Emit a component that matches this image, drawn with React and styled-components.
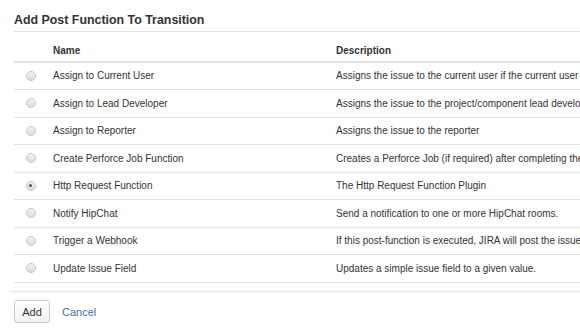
import styled, { createGlobalStyle } from "styled-components";

const GlobalStyle = createGlobalStyle`
  html, body {
    margin: 0;
    padding: 0;
    background: #fff;
    overflow: hidden;
  }
  body {
    font-family: "Liberation Sans", Arial, sans-serif;
    color: #333;
  }
`;

const Dialog = styled.div`
  width: 580px;
  height: 330px;
  overflow: hidden;
`;

const Header = styled.div`
  margin: 12.5px 0 0 14px;
  padding-bottom: 3px;
  border-bottom: 1px solid #e2e2e2;
`;

const Title = styled.h2`
  margin: 0;
  font-size: 12.4px;
  line-height: 15px;
  font-weight: bold;
  color: #333;
`;

const Body = styled.div`
  padding-left: 14px;
`;

const Table = styled.table`
  width: 720px;
  border-collapse: collapse;
  table-layout: fixed;
  font-size: 10px;
`;

const Th = styled.th`
  text-align: left;
  font-weight: bold;
  line-height: 13px;
  padding: 12.5px 10px 3.5px;
  border-bottom: 2px solid #e2e2e2;
  white-space: nowrap;
`;

const Td = styled.td`
  line-height: 13.5px;
  padding: 6.5px 10px;
  border-bottom: 1px solid #e2e2e2;
  white-space: nowrap;
  overflow: hidden;
`;

const RadioCell = styled(Td)`
  padding: 0 0 0 11.5px;
  vertical-align: middle;
`;

const Radio = styled.span`
  display: block;
  position: relative;
  width: 10px;
  height: 10px;
  box-sizing: border-box;
  border-radius: 50%;
  border: 1px solid #c8c8c8;
  background: linear-gradient(#f2f2f2, #dedede);

  &::after {
    content: "";
    display: ${(p) => (p.$checked ? "block" : "none")};
    position: absolute;
    left: 2.5px;
    top: 2.5px;
    width: 3px;
    height: 3px;
    border-radius: 50%;
    background: #555;
  }
`;

const Footer = styled.div`
  margin: 8.5px 0 0 10px;
  border-top: 1px solid #e2e2e2;
  padding: 8px 0 0 4px;
  display: flex;
  align-items: center;
  gap: 12px;
`;

const Button = styled.button`
  font-family: "Liberation Sans", Arial, sans-serif;
  font-size: 11px;
  color: #333;
  height: 23px;
  width: 36px;
  padding: 0;
  border: 1px solid #ccc;
  border-radius: 3px;
  background: linear-gradient(#fff, #f2f2f2);
`;

const CancelLink = styled.a`
  font-size: 11px;
  color: #3b73af;
  text-decoration: none;
`;

const rows = [
  ["Assign to Current User", "Assigns the issue to the current user if the current user has permission to assign the issue."],
  ["Assign to Lead Developer", "Assigns the issue to the project/component lead developer"],
  ["Assign to Reporter", "Assigns the issue to the reporter"],
  ["Create Perforce Job Function", "Creates a Perforce Job (if required) after completing the workflow transition"],
  ["Http Request Function", "The Http Request Function Plugin"],
  ["Notify HipChat", "Send a notification to one or more HipChat rooms."],
  ["Trigger a Webhook", "If this post-function is executed, JIRA will post the issue content to a webhook URL"],
  ["Update Issue Field", "Updates a simple issue field to a given value."],
];

export default function App() {
  return (
    <>
      <GlobalStyle />
      <Dialog>
        <Header>
          <Title>Add Post Function To Transition</Title>
        </Header>
        <Body>
          <Table>
            <colgroup>
              <col style={{ width: 29 }} />
              <col style={{ width: 283 }} />
              <col />
            </colgroup>
            <thead>
              <tr>
                <Th />
                <Th>Name</Th>
                <Th>Description</Th>
              </tr>
            </thead>
            <tbody>
              {rows.map(([name, desc]) => (
                <tr key={name}>
                  <RadioCell>
                    <Radio $checked={name === "Http Request Function"} />
                  </RadioCell>
                  <Td>{name}</Td>
                  <Td>{desc}</Td>
                </tr>
              ))}
            </tbody>
          </Table>
        </Body>
        <Footer>
          <Button>Add</Button>
          <CancelLink href="#">Cancel</CancelLink>
        </Footer>
      </Dialog>
    </>
  );
}
